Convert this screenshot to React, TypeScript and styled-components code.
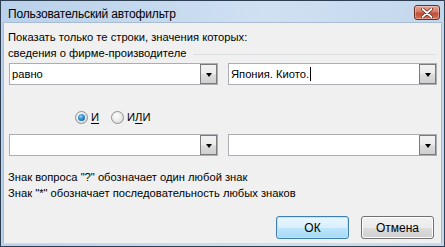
import styled, { createGlobalStyle } from 'styled-components';

const GlobalStyle = createGlobalStyle`
  html, body {
    margin: 0;
    padding: 0;
    background: #ffffff;
  }
  body {
    font-family: 'Liberation Sans', 'Noto Sans', sans-serif;
    font-size: 11.2px;
    color: #000;
  }
`;

const Window = styled.div`
  width: 445px;
  height: 247px;
  box-sizing: border-box;
  display: flex;
  flex-direction: column;
  border: 1px solid #2f3f52;
  padding: 0 2px 2px 2px;
  background: linear-gradient(to right, #b9d1ea 0%, #cfe0f1 60%, #c3d7ec 100%);
`;

const TitleBar = styled.div`
  height: 21px;
  display: flex;
  align-items: center;
  justify-content: space-between;
  padding: 0 2px 0 5px;
`;

const Title = styled.span`
  font-size: 12px;
  letter-spacing: -0.15px;
  color: #000;
  margin-top: 4px;
`;

const CloseButton = styled.div`
  width: 26px;
  height: 15px;
  box-sizing: border-box;
  border: 1px solid #6b2d22;
  border-radius: 3px;
  display: flex;
  align-items: center;
  justify-content: center;
  margin-top: 2px;
  background: linear-gradient(to bottom, #e8a493 0%, #d47a66 45%, #c24a32 55%, #d4735c 100%);
  box-shadow: inset 0 0 0 1px rgba(255, 255, 255, 0.35);
`;

const Client = styled.div`
  flex: 1;
  display: flex;
  flex-direction: column;
  background: #f0f0f0;
  border: 1px solid #aabcd0;
  border-bottom-color: #cbdcec;
  padding: 6px 4px 0 4px;
`;

const Line = styled.div`
  height: 16px;
  line-height: 16px;
  white-space: nowrap;
`;

const GroupRow = styled.div`
  height: 16px;
  display: flex;
  align-items: center;
  gap: 8px;
`;

const GroupRule = styled.div`
  flex: 1;
  height: 1px;
  background: #d5dfe5;
  margin-top: 2px;
  margin-right: 1px;
`;

const ComboRow = styled.div<{ $top: number }>`
  display: flex;
  gap: 10px;
  margin-top: ${(p) => p.$top}px;
  padding-left: 1px;
`;

const Combo = styled.div<{ $width: number }>`
  width: ${(p) => p.$width}px;
  height: 22px;
  box-sizing: border-box;
  border: 1px solid #abadb3;
  background: #fff;
  display: flex;
  align-items: stretch;
`;

const ComboText = styled.div`
  flex: 1;
  padding-left: 2px;
  line-height: 20px;
  white-space: nowrap;
`;

const Caret = styled.span`
  display: inline-block;
  width: 1px;
  height: 14px;
  background: #000;
  vertical-align: -3px;
  margin-left: 1px;
`;

const DropButton = styled.div`
  width: 17px;
  box-sizing: border-box;
  border: 1px solid #7a7a7a;
  background: linear-gradient(to bottom, #f2f2f2 0%, #ebebeb 50%, #dddddd 51%, #cfcfcf 100%);
  display: flex;
  align-items: center;
  justify-content: center;
`;

const Arrow = styled.span`
  width: 0;
  height: 0;
  border-left: 3.5px solid transparent;
  border-right: 3.5px solid transparent;
  border-top: 4px solid #000;
  margin-top: 1px;
`;

const RadioRow = styled.div`
  display: flex;
  align-items: center;
  height: 16px;
  margin-top: 24px;
  padding-left: 67px;
  gap: 12px;
`;

const RadioItem = styled.label`
  display: flex;
  align-items: center;
  gap: 3px;
`;

const RadioCircle = styled.span<{ $checked?: boolean }>`
  width: 13px;
  height: 13px;
  box-sizing: border-box;
  border-radius: 50%;
  border: 1px solid #8e8f8f;
  background: radial-gradient(circle at 40% 35%, #ffffff 0%, #e6e6e6 60%, #d2d2d2 100%);
  display: flex;
  align-items: center;
  justify-content: center;

  &::after {
    content: '';
    display: ${(p) => (p.$checked ? 'block' : 'none')};
    width: 7px;
    height: 7px;
    border-radius: 50%;
    background: radial-gradient(circle at 40% 35%, #9ad6f6 0%, #2a8fd2 45%, #0d4a87 100%);
  }
`;

const AccessKey = styled.span`
  text-decoration: underline;
  text-underline-offset: 2px;
`;

const HintBlock = styled.div`
  margin-top: 13px;
`;

const ButtonRow = styled.div`
  display: flex;
  justify-content: flex-end;
  gap: 12px;
  margin-top: 15px;
  padding-right: 3px;
`;

const Button = styled.div<{ $default?: boolean }>`
  width: 73px;
  height: 23px;
  box-sizing: border-box;
  border-radius: 3px;
  font-size: 12px;
  border: 1px solid ${(p) => (p.$default ? '#3c7fb1' : '#707070')};
  background: ${(p) =>
    p.$default
      ? 'linear-gradient(to bottom, #eaf6fd 0%, #d9f0fc 50%, #bee6fd 51%, #a7d9f5 100%)'
      : 'linear-gradient(to bottom, #f2f2f2 0%, #ebebeb 50%, #dddddd 51%, #cfcfcf 100%)'};
  box-shadow: inset 0 0 0 1px ${(p) => (p.$default ? '#c3e4f7' : '#fcfcfc')};
  display: flex;
  align-items: center;
  justify-content: center;
`;

const CloseGlyph = () => (
  <svg width="12" height="10" viewBox="0 0 12 10">
    <path d="M1.5 1 L10.5 9 M10.5 1 L1.5 9" stroke="#5a1a10" strokeWidth="3.2" strokeLinecap="round" />
    <path d="M1.5 1 L10.5 9 M10.5 1 L1.5 9" stroke="#ffffff" strokeWidth="1.8" strokeLinecap="round" />
  </svg>
);

const ComboBox = ({ width, value, caret }: { width: number; value?: string; caret?: boolean }) => (
  <Combo $width={width}>
    <ComboText>
      {value}
      {caret && <Caret />}
    </ComboText>
    <DropButton>
      <Arrow />
    </DropButton>
  </Combo>
);

export default function App() {
  return (
    <>
      <GlobalStyle />
      <Window>
        <TitleBar>
          <Title>Пользовательский автофильтр</Title>
          <CloseButton>
            <CloseGlyph />
          </CloseButton>
        </TitleBar>
        <Client>
          <Line>Показать только те строки, значения которых:</Line>
          <GroupRow>
            <span>сведения о фирме-производителе</span>
            <GroupRule />
          </GroupRow>
          <ComboRow $top={2}>
            <ComboBox width={209} value="равно" />
            <ComboBox width={209} value="Япония. Киото." caret />
          </ComboRow>
          <RadioRow>
            <RadioItem>
              <RadioCircle $checked />
              <AccessKey>И</AccessKey>
            </RadioItem>
            <RadioItem>
              <RadioCircle />
              <span>
                И<AccessKey>Л</AccessKey>И
              </span>
            </RadioItem>
          </RadioRow>
          <ComboRow $top={9}>
            <ComboBox width={209} />
            <ComboBox width={209} />
          </ComboRow>
          <HintBlock>
            <Line>Знак вопроса "?" обозначает один любой знак</Line>
            <Line>Знак "*" обозначает последовательность любых знаков</Line>
          </HintBlock>
          <ButtonRow>
            <Button $default>ОК</Button>
            <Button>Отмена</Button>
          </ButtonRow>
        </Client>
      </Window>
    </>
  );
}
